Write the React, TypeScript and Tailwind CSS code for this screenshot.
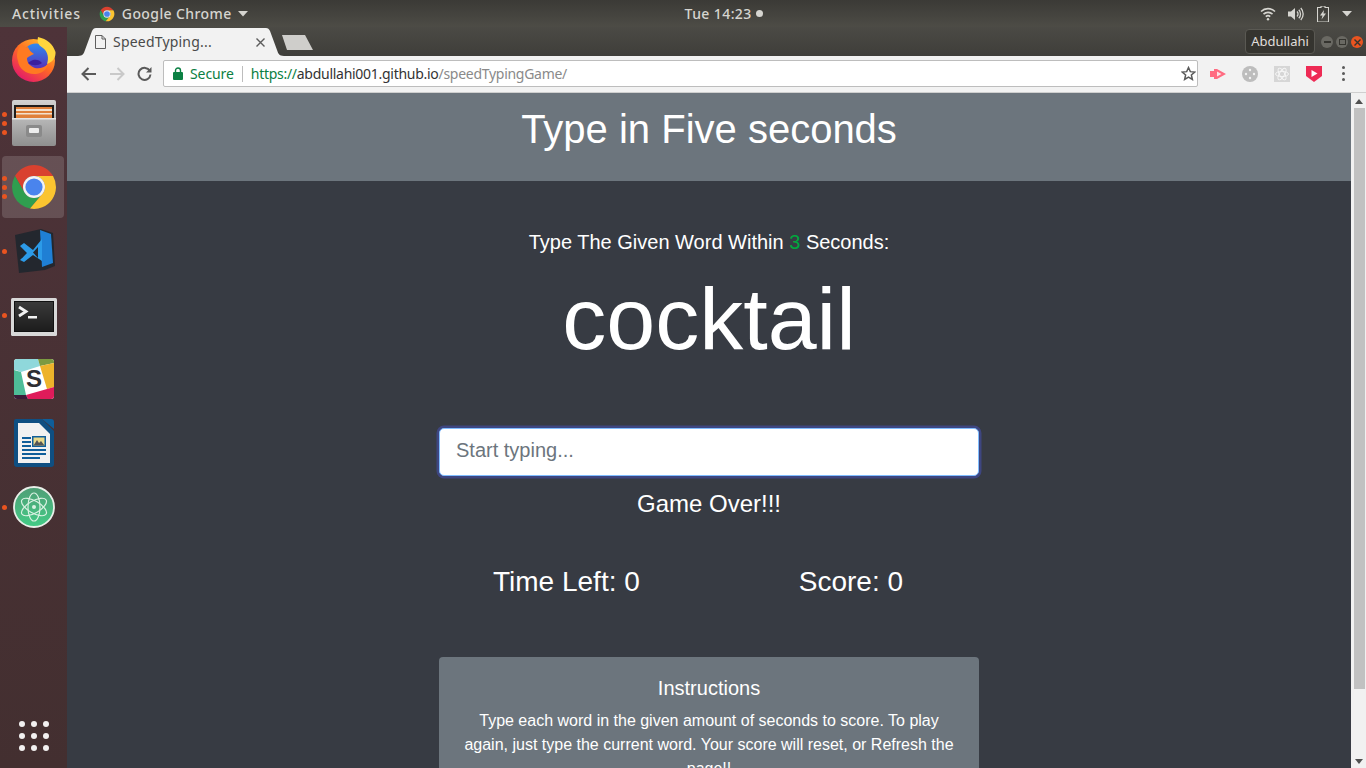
import { ReactNode } from "react";

const ChromeLogo = ({ size = 48 }: { size?: number }) => (
  <svg width={size} height={size} viewBox="0 0 48 48">
    <path d="M5 13A22 22 0 0 1 43.05 13L24 13A11 11 0 0 0 14.5 29.5Z" fill="#d9412f" />
    <path d="M5 13A22 22 0 0 0 20 45.6L33.5 29.5A11 11 0 0 1 14.5 29.5Z" fill="#2f9e4f" />
    <path d="M43.05 13A22 22 0 0 1 20 45.6L33.5 29.5A11 11 0 0 0 24 13Z" fill="#fbc430" />
    <circle cx="24" cy="24" r="11" fill="#f3f3f3" />
    <circle cx="24" cy="24" r="8.6" fill="#4a84ed" />
  </svg>
);

const FirefoxLogo = () => (
  <svg width="46" height="46" viewBox="0 0 46 46">
    <defs>
      <linearGradient id="ffBody" x1="0.8" y1="0.1" x2="0.2" y2="0.95">
        <stop offset="0" stopColor="#ffb52b" />
        <stop offset="0.45" stopColor="#ff6a24" />
        <stop offset="1" stopColor="#e3186b" />
      </linearGradient>
      <linearGradient id="ffInner" x1="0.5" y1="0" x2="0.5" y2="1">
        <stop offset="0" stopColor="#2d8bf0" />
        <stop offset="1" stopColor="#5b2ab5" />
      </linearGradient>
    </defs>
    <circle cx="22.500" cy="24.500" r="21.500" fill="url(#ffBody)" />
    <circle cx="25" cy="21" r="13.500" fill="url(#ffInner)" />
    <path d="M27 1C26 6 27 9 32 12C37 16 38 22 36 28C42 26 45 21 44.500 16C42 8 36 3 27 1Z" fill="#ffd53d" />
    <path d="M11 8C6 13 5 19 7 25C8 33 16 39 25 38C32 37 36 33 37 28C33 32 28 33 24 32C19 30 16 27 16 22C18 20 21 19 23 18C20 16 18 14 17 11C15 12 13 11 11 8Z" fill="#ff7a22" />
    <path d="M17 27C21 30 27 30 31 27C29 24 25 23 22 24C20 25 18 26 17 27Z" fill="#3b1f9e" />
  </svg>
);

const FilesIcon = () => (
  <svg width="44" height="46" viewBox="0 0 44 46">
    <defs>
      <linearGradient id="fileBody" x1="0" y1="0" x2="0" y2="1">
        <stop offset="0" stopColor="#d2d2d2" />
        <stop offset="1" stopColor="#8f8f8f" />
      </linearGradient>
    </defs>
    <rect x="0" y="0" width="44" height="46" rx="2" fill="url(#fileBody)" />
    <rect x="2" y="5" width="40" height="13" fill="#1f1d1c" />
    <rect x="4" y="7" width="36" height="11" fill="#e0803a" />
    <rect x="4" y="9" width="36" height="2" fill="#f3e2cf" />
    <rect x="4" y="13" width="36" height="1.5" fill="#f3e2cf" />
    <rect x="0" y="18" width="44" height="1.5" fill="#e6e6e6" />
    <rect x="14" y="25" width="16" height="12" rx="2" fill="#8a8a8a" />
    <rect x="17" y="28" width="10" height="5" rx="1" fill="#ededed" />
  </svg>
);

const VsCodeIcon = () => (
  <svg width="42" height="44" viewBox="0 0 42 44">
    <path d="M2 6L28 0L40 4L42 37L32 41L6 44Z" fill="#23272e" />
    <path d="M27 1L38 5L40 34L29 38Z" fill="#1f7fd4" />
    <path d="M7 17L11 14L20 21L29 10V32L20 26L11 33L7 31L14 24Z" fill="#2c9be8" />
    <path d="M13 24L9 29V20Z" fill="#23272e" />
    <path d="M20 23.5L25 18V29Z" fill="#23272e" />
  </svg>
);

const TerminalIcon = () => (
  <svg className="mt-[3px]" width="46" height="38" viewBox="0 0 46 38">
    <defs>
      <linearGradient id="termScreen" x1="0" y1="0" x2="0" y2="1">
        <stop offset="0" stopColor="#3a3a3a" />
        <stop offset="1" stopColor="#1c1c1c" />
      </linearGradient>
    </defs>
    <rect x="0" y="0" width="46" height="38" rx="1.5" fill="#d8d8d8" />
    <rect x="3.500" y="3.500" width="39" height="30" fill="url(#termScreen)" stroke="#111" strokeWidth="1" />
    <path d="M8 9L15 13.500L8 18" fill="none" stroke="#f2f2f2" strokeWidth="2.800" />
    <rect x="17" y="18" width="9" height="2.500" fill="#f2f2f2" />
  </svg>
);

const SlackIcon = () => (
  <svg width="40" height="40" viewBox="0 0 40 40">
    <rect width="40" height="40" rx="3" fill="#fff" />
    <path d="M0 3A3 3 0 0 1 3 0H24L26 7L7 13L2 11H0Z" fill="#8fd8db" />
    <path d="M26 7L24 0H37A3 3 0 0 1 40 3V4Z" fill="#7b9a41" />
    <path d="M26 7L40 4V28L33 30Z" fill="#edb32b" />
    <path d="M33 30L40 28V37A3 3 0 0 1 37 40H14L12 36Z" fill="#df1b5a" />
    <path d="M0 11L7 13L12 36L0 36Z" fill="#4ebd98" />
    <path d="M0 36H12L14 40H3A3 3 0 0 1 0 37Z" fill="#3b1d39" />
    <text x="20" y="28" textAnchor="middle" fontFamily="Liberation Sans, sans-serif" fontWeight="700" fontSize="24" fill="#2e2e33">S</text>
  </svg>
);

const WriterIcon = () => (
  <svg width="40" height="48" viewBox="0 0 40 48">
    <path d="M2 0H28L40 12V45A3 3 0 0 1 37 48H3A3 3 0 0 1 0 45V2A2 2 0 0 1 2 0Z" fill="#0f4f82" />
    <path d="M28 0H37A3 3 0 0 1 40 3V10Z" fill="#0f5e9a" />
    <path d="M4 4H25L36 15V44H4Z" fill="#f1f1f1" />
    <rect x="8" y="18" width="9" height="2" fill="#0f5e9a" />
    <rect x="8" y="22" width="9" height="2" fill="#0f5e9a" />
    <rect x="8" y="26" width="9" height="2" fill="#0f5e9a" />
    <rect x="8" y="30" width="24" height="2" fill="#0f5e9a" />
    <rect x="8" y="34" width="24" height="2" fill="#0f5e9a" />
    <rect x="8" y="38" width="18" height="2" fill="#0f5e9a" />
    <rect x="18" y="17" width="14" height="11" fill="#0f5e9a" />
    <rect x="19.5" y="18.5" width="11" height="8" fill="#e9d98a" />
    <path d="M19.5 26.5L23 21L25 24L27 22L30.5 26.5Z" fill="#555" />
  </svg>
);

const AtomIcon = () => (
  <svg width="42" height="42" viewBox="0 0 42 42">
    <defs>
      <linearGradient id="atomBg" x1="0" y1="0" x2="0" y2="1">
        <stop offset="0" stopColor="#4f9e76" />
        <stop offset="1" stopColor="#43cb86" />
      </linearGradient>
    </defs>
    <circle cx="21" cy="21" r="20" fill="url(#atomBg)" stroke="#e9efe9" strokeWidth="1.8" />
    <g fill="none" stroke="#d9f1e2" strokeWidth="1.2">
      <ellipse cx="21" cy="21" rx="14" ry="6" transform="rotate(30 21 21)" />
      <ellipse cx="21" cy="21" rx="14" ry="6" transform="rotate(-30 21 21)" />
      <ellipse cx="21" cy="21" rx="14" ry="6" transform="rotate(90 21 21)" />
    </g>
    <circle cx="21" cy="21" r="2" fill="#d9f1e2" />
  </svg>
);

const DockItem = ({ children, dots = 0, active = false }: { children: ReactNode; dots?: number; active?: boolean }) => (
  <div className="relative flex h-16 w-full items-center justify-center">
    {active && <div className="absolute left-[2px] top-[1px] h-[62px] w-[62px] rounded bg-white/15" />}
    {dots > 0 && (
      <div className="absolute left-[2px] top-0 flex h-full flex-col justify-center gap-[4px]">
        {Array.from({ length: dots }).map((_, i) => (
          <span key={i} className="h-[5px] w-[5px] rounded-full bg-[#e95420]" />
        ))}
      </div>
    )}
    <div className="relative flex">{children}</div>
  </div>
);

const TopBar = () => (
  <div className="flex h-[27px] shrink-0 items-center bg-gradient-to-b from-[#3b3a36] to-[#4d4c46] font-['Noto_Sans',sans-serif] text-[14px] font-medium tracking-[0.4px] text-[#d6d5d0]">
    <span className="ml-3 tracking-[0.85px]">Activities</span>
    <div className="ml-[18px] flex items-center">
      <ChromeLogo size={16} />
      <span className="ml-[7px]">Google Chrome</span>
      <svg className="ml-[6px]" width="10" height="6" viewBox="0 0 10 6"><path d="M0 0H10L5 5.5Z" fill="#d6d5d0" /></svg>
    </div>
    <div className="ml-[437px] flex items-center">
      <span>Tue 14:23</span>
      <span className="ml-[4px] h-[7px] w-[7px] rounded-full bg-[#d6d5d0]" />
    </div>
    <div className="ml-auto mr-[14px] flex items-center">
      <svg width="16" height="14" viewBox="0 0 16 14" fill="none" stroke="#d6d5d0" strokeWidth="1.6">
        <path d="M1 4.5A10 10 0 0 1 15 4.5" />
        <path d="M3.5 7.2A6.5 6.5 0 0 1 12.5 7.2" />
        <path d="M5.8 9.6A3.2 3.2 0 0 1 10.2 9.6" />
        <circle cx="8" cy="12.2" r="1.2" fill="#d6d5d0" stroke="none" />
      </svg>
      <svg className="ml-[12px]" width="16" height="14" viewBox="0 0 16 14" fill="none" stroke="#d6d5d0" strokeWidth="1.3">
        <path d="M0 4.5H3L7 1V13L3 9.5H0Z" fill="#d6d5d0" stroke="none" />
        <path d="M9 4.5A3.5 3.5 0 0 1 9 9.5" />
        <path d="M10.8 2.8A6 6 0 0 1 10.8 11.2" />
        <path d="M12.8 1A8.8 8.8 0 0 1 12.8 13" />
      </svg>
      <svg className="ml-[13px]" width="12" height="16" viewBox="0 0 12 16">
        <path d="M4 0H8V1.5H11.5V16H0.5V1.5H4Z" fill="none" stroke="#d6d5d0" strokeWidth="1.1" />
        <path d="M7 4L3 9.5H5.5L4.5 13.5L9 7.5H6.5Z" fill="#d6d5d0" />
      </svg>
      <svg className="ml-[13px]" width="10" height="6" viewBox="0 0 10 6"><path d="M0 0H10L5 5.5Z" fill="#d6d5d0" /></svg>
    </div>
  </div>
);

const TabStrip = () => (
  <div className="flex h-[29px] shrink-0 items-end bg-gradient-to-b from-[#4b4a45] to-[#3f3e3a] pr-[3px]">
    <div className="relative ml-[11px] flex h-[28px] w-[206px] items-center">
      <svg className="absolute left-0 top-0" width="206" height="28" viewBox="0 0 206 28">
        <path d="M0 28C5 28 6 25 7 22L14 3C15 1 16 0 18 0H188C190 0 191 1 192 3L199 22C200 25 201 28 206 28Z" fill="#f2f2f2" />
      </svg>
      <svg className="relative ml-[17px]" width="11" height="14" viewBox="0 0 11 14" fill="none" stroke="#5f5f5f" strokeWidth="1">
        <path d="M0.5 0.5H7L10.5 4V13.5H0.5Z" />
        <path d="M7 0.5V4H10.5" />
      </svg>
      <span className="relative ml-[7px] font-['Noto_Sans',sans-serif] text-[14px] leading-none tracking-[0.2px] text-[#4a4a4a]">SpeedTyping...</span>
      <svg className="relative ml-[auto] mr-[19px]" width="9" height="9" viewBox="0 0 9 9" stroke="#5c5c5c" strokeWidth="1.4"><path d="M0.5 0.5L8.5 8.5M8.5 0.5L0.5 8.5" /></svg>
    </div>
    <svg className="mb-[6px] ml-[-3px]" width="33" height="15" viewBox="0 0 33 15"><path d="M1 0H24L32 15H6Z" fill="#cfcecb" /></svg>
    <div className="mb-[2px] ml-auto flex h-[25px] w-[70px] items-center justify-center rounded border border-[#5a5953] bg-[#35342f] font-['Noto_Sans',sans-serif] text-[13px] text-[#e0dfdb]">Abdullahi</div>
    <div className="mb-[8px] ml-[6px] flex items-center gap-[3px]">
      <span className="flex h-3 w-3 items-center justify-center rounded-full bg-[#6a6963]"><span className="h-[2px] w-[7px] bg-[#35342f]" /></span>
      <span className="flex h-3 w-3 items-center justify-center rounded-full bg-[#6a6963]"><span className="h-[6px] w-[7px] border border-[#35342f]" /></span>
      <span className="flex h-3 w-3 items-center justify-center rounded-full bg-[#e95420] text-[#35342f]">
        <svg width="7" height="7" viewBox="0 0 7 7" stroke="#35342f" strokeWidth="1.4"><path d="M0.5 0.5L6.5 6.5M6.5 0.5L0.5 6.5" /></svg>
      </span>
    </div>
  </div>
);

const Toolbar = () => (
  <div className="flex h-[37px] shrink-0 items-center border-b border-[#cfcfcf] bg-[#f2f2f2] pb-[1px]">
    <svg className="ml-[14px]" width="16" height="14" viewBox="0 0 16 14" fill="none" stroke="#5a5a5a" strokeWidth="2"><path d="M15 7H2M7.5 1L1.5 7L7.5 13" /></svg>
    <svg className="ml-[12px]" width="16" height="14" viewBox="0 0 16 14" fill="none" stroke="#c9c9c9" strokeWidth="2"><path d="M1 7H14M8.5 1L14.5 7L8.5 13" /></svg>
    <svg className="ml-[12px]" width="15" height="15" viewBox="0 0 15 15" fill="none" stroke="#5a5a5a" strokeWidth="2">
      <path d="M12.8 5A6 6 0 1 0 13.5 8.5" />
      <path d="M14.5 1V6.5H9Z" fill="#5a5a5a" stroke="none" />
    </svg>
    <div className="ml-[11px] flex h-[27px] w-[1035px] items-center rounded-[2px] border border-[#bdbdbd] bg-white font-['Noto_Sans',sans-serif] text-[14px]">
      <svg className="ml-[9px]" width="10" height="13" viewBox="0 0 10 13">
        <rect x="0" y="5" width="10" height="8" rx="1" fill="#0b8043" />
        <path d="M2.5 5.5V3.5A2.5 2.5 0 0 1 7.500 3.500V5.500" fill="none" stroke="#0b8043" strokeWidth="1.4" />
      </svg>
      <span className="ml-[7px] tracking-[-0.1px] text-[#0b8043]">Secure</span>
      <span className="ml-[8px] h-[16px] w-px bg-[#bdbdbd]" />
      <span className="ml-[8px] whitespace-nowrap tracking-[-0.28px]">
        <span className="text-[#0b8043]">https://</span>
        <span className="text-[#333]">abdullahi001.github.io</span>
        <span className="text-[#8a8a8a]">/speedTypingGame/</span>
      </span>
      <svg className="ml-auto mr-[1px]" width="15" height="15" viewBox="0 0 24 24" fill="none" stroke="#5a5a5a" strokeWidth="2.4"><path d="M12 2.500L14.900 9L22 9.700L16.600 14.400L18.200 21.500L12 17.800L5.800 21.500L7.400 14.400L2 9.700L9.100 9Z" /></svg>
    </div>
    <svg className="ml-[12px]" width="16" height="14" viewBox="0 0 16 14"><path d="M0 4H4V2H7L16 7L7 12H4V10H0Z" fill="#ff6b81" /><path d="M7 4.500L11.500 7L7 9.500Z" fill="#fde3e7" /></svg>
    <svg className="ml-[16px]" width="16" height="16" viewBox="0 0 16 16">
      <circle cx="8" cy="8" r="8" fill="#bdbdbd" />
      <circle cx="8" cy="4" r="1.200" fill="#f2f2f2" />
      <circle cx="4" cy="8" r="1.200" fill="#f2f2f2" />
      <circle cx="12" cy="8" r="1.200" fill="#f2f2f2" />
      <circle cx="8" cy="12" r="1.200" fill="#f2f2f2" />
    </svg>
    <svg className="ml-[16px]" width="16" height="16" viewBox="0 0 16 16">
      <rect width="16" height="16" fill="#d6d6d6" />
      <g fill="none" stroke="#f7f7f7" strokeWidth="0.9">
        <ellipse cx="8" cy="8" rx="6.500" ry="2.600" />
        <ellipse cx="8" cy="8" rx="6.500" ry="2.600" transform="rotate(60 8 8)" />
        <ellipse cx="8" cy="8" rx="6.500" ry="2.600" transform="rotate(120 8 8)" />
      </g>
    </svg>
    <svg className="ml-[16px]" width="16" height="16" viewBox="0 0 16 16">
      <path d="M0 0H16V10L8 16L0 10Z" fill="#ee2b55" />
      <path d="M5.500 4V11L11.500 7.500Z" fill="#fff" />
    </svg>
    <div className="ml-[20px] flex flex-col gap-[3px]">
      <span className="h-[3px] w-[3px] rounded-full bg-[#5a5a5a]" />
      <span className="h-[3px] w-[3px] rounded-full bg-[#5a5a5a]" />
      <span className="h-[3px] w-[3px] rounded-full bg-[#5a5a5a]" />
    </div>
  </div>
);

const GamePage = () => (
  <div className="h-full min-w-0 flex-1 overflow-hidden bg-[#373b43] text-center font-['Liberation_Sans',sans-serif] text-white">
    <header className="flex h-[88px] justify-center bg-[#6c757d] pt-[12px]">
      <h1 className="text-[40px] leading-[48px]">Type in Five seconds</h1>
    </header>
    <div className="mx-auto w-[540px]">
      <p className="mt-[46px] text-[20px] leading-[30px]">
        Type The Given Word Within <span className="text-[#00a83e]">3</span> Seconds:
      </p>
      <h2 className="mt-[9px] text-[88px] leading-[105px]">cocktail</h2>
      <input
        placeholder="Start typing..."
        className="mt-[57px] h-[48px] w-full rounded-[5px] border border-[#80bdff] bg-white px-4 pb-1 text-[20px] shadow-[0_0_0_2.5px_#3e4680] outline-none placeholder:text-[#6c757d]"
      />
      <h5 className="mt-[13px] text-[24px] leading-[29px]">Game Over!!!</h5>
      <div className="mt-[47px] flex text-[28px] leading-[34px]">
        <span className="ml-[54px]">Time Left: 0</span>
        <span className="ml-[159px]">Score: 0</span>
      </div>
      <div className="mt-[58px] rounded bg-[#6c757d] px-5 pt-[19px] text-[16px] leading-[24px]">
        <h5 className="mb-[9px] text-[20px] leading-[24px]">Instructions</h5>
        <p>Type each word in the given amount of seconds to score. To play again, just type the current word. Your score will reset, or Refresh the page!!</p>
      </div>
    </div>
  </div>
);

const Scrollbar = () => (
  <div className="flex h-full w-[15px] shrink-0 flex-col items-center bg-[#f1f1f1] pl-[1px]">
    <svg className="mt-[6px]" width="8" height="5" viewBox="0 0 8 5"><path d="M4 0L8 5H0Z" fill="#505050" /></svg>
    <div className="mt-[4px] h-[581px] w-[11px] bg-[#c1c1c1]" />
    <svg className="mb-[4px] mt-auto" width="8" height="5" viewBox="0 0 8 5"><path d="M0 0H8L4 5Z" fill="#505050" /></svg>
  </div>
);

export default function App() {
  return (
    <div className="flex h-[768px] w-[1366px] flex-col overflow-hidden">
      <TopBar />
      <div className="flex min-h-0 flex-1">
        <aside className="flex w-[67px] shrink-0 flex-col items-center bg-gradient-to-b from-[#4e3339] to-[#432f30]">
          <DockItem><FirefoxLogo /></DockItem>
          <DockItem dots={3}><FilesIcon /></DockItem>
          <DockItem dots={3} active><ChromeLogo /></DockItem>
          <DockItem dots={1}><VsCodeIcon /></DockItem>
          <DockItem dots={1}><TerminalIcon /></DockItem>
          <DockItem><SlackIcon /></DockItem>
          <DockItem><WriterIcon /></DockItem>
          <DockItem dots={1}><AtomIcon /></DockItem>
          <div className="mb-[17px] mt-auto grid grid-cols-3 gap-[6px]">
            {Array.from({ length: 9 }).map((_, i) => (
              <span key={i} className="h-[6px] w-[6px] rounded-full bg-[#f2f0f0]" />
            ))}
          </div>
        </aside>
        <div className="flex min-w-0 flex-1 flex-col">
          <TabStrip />
          <Toolbar />
          <div className="flex min-h-0 flex-1">
            <GamePage />
            <Scrollbar />
          </div>
        </div>
      </div>
    </div>
  );
}
